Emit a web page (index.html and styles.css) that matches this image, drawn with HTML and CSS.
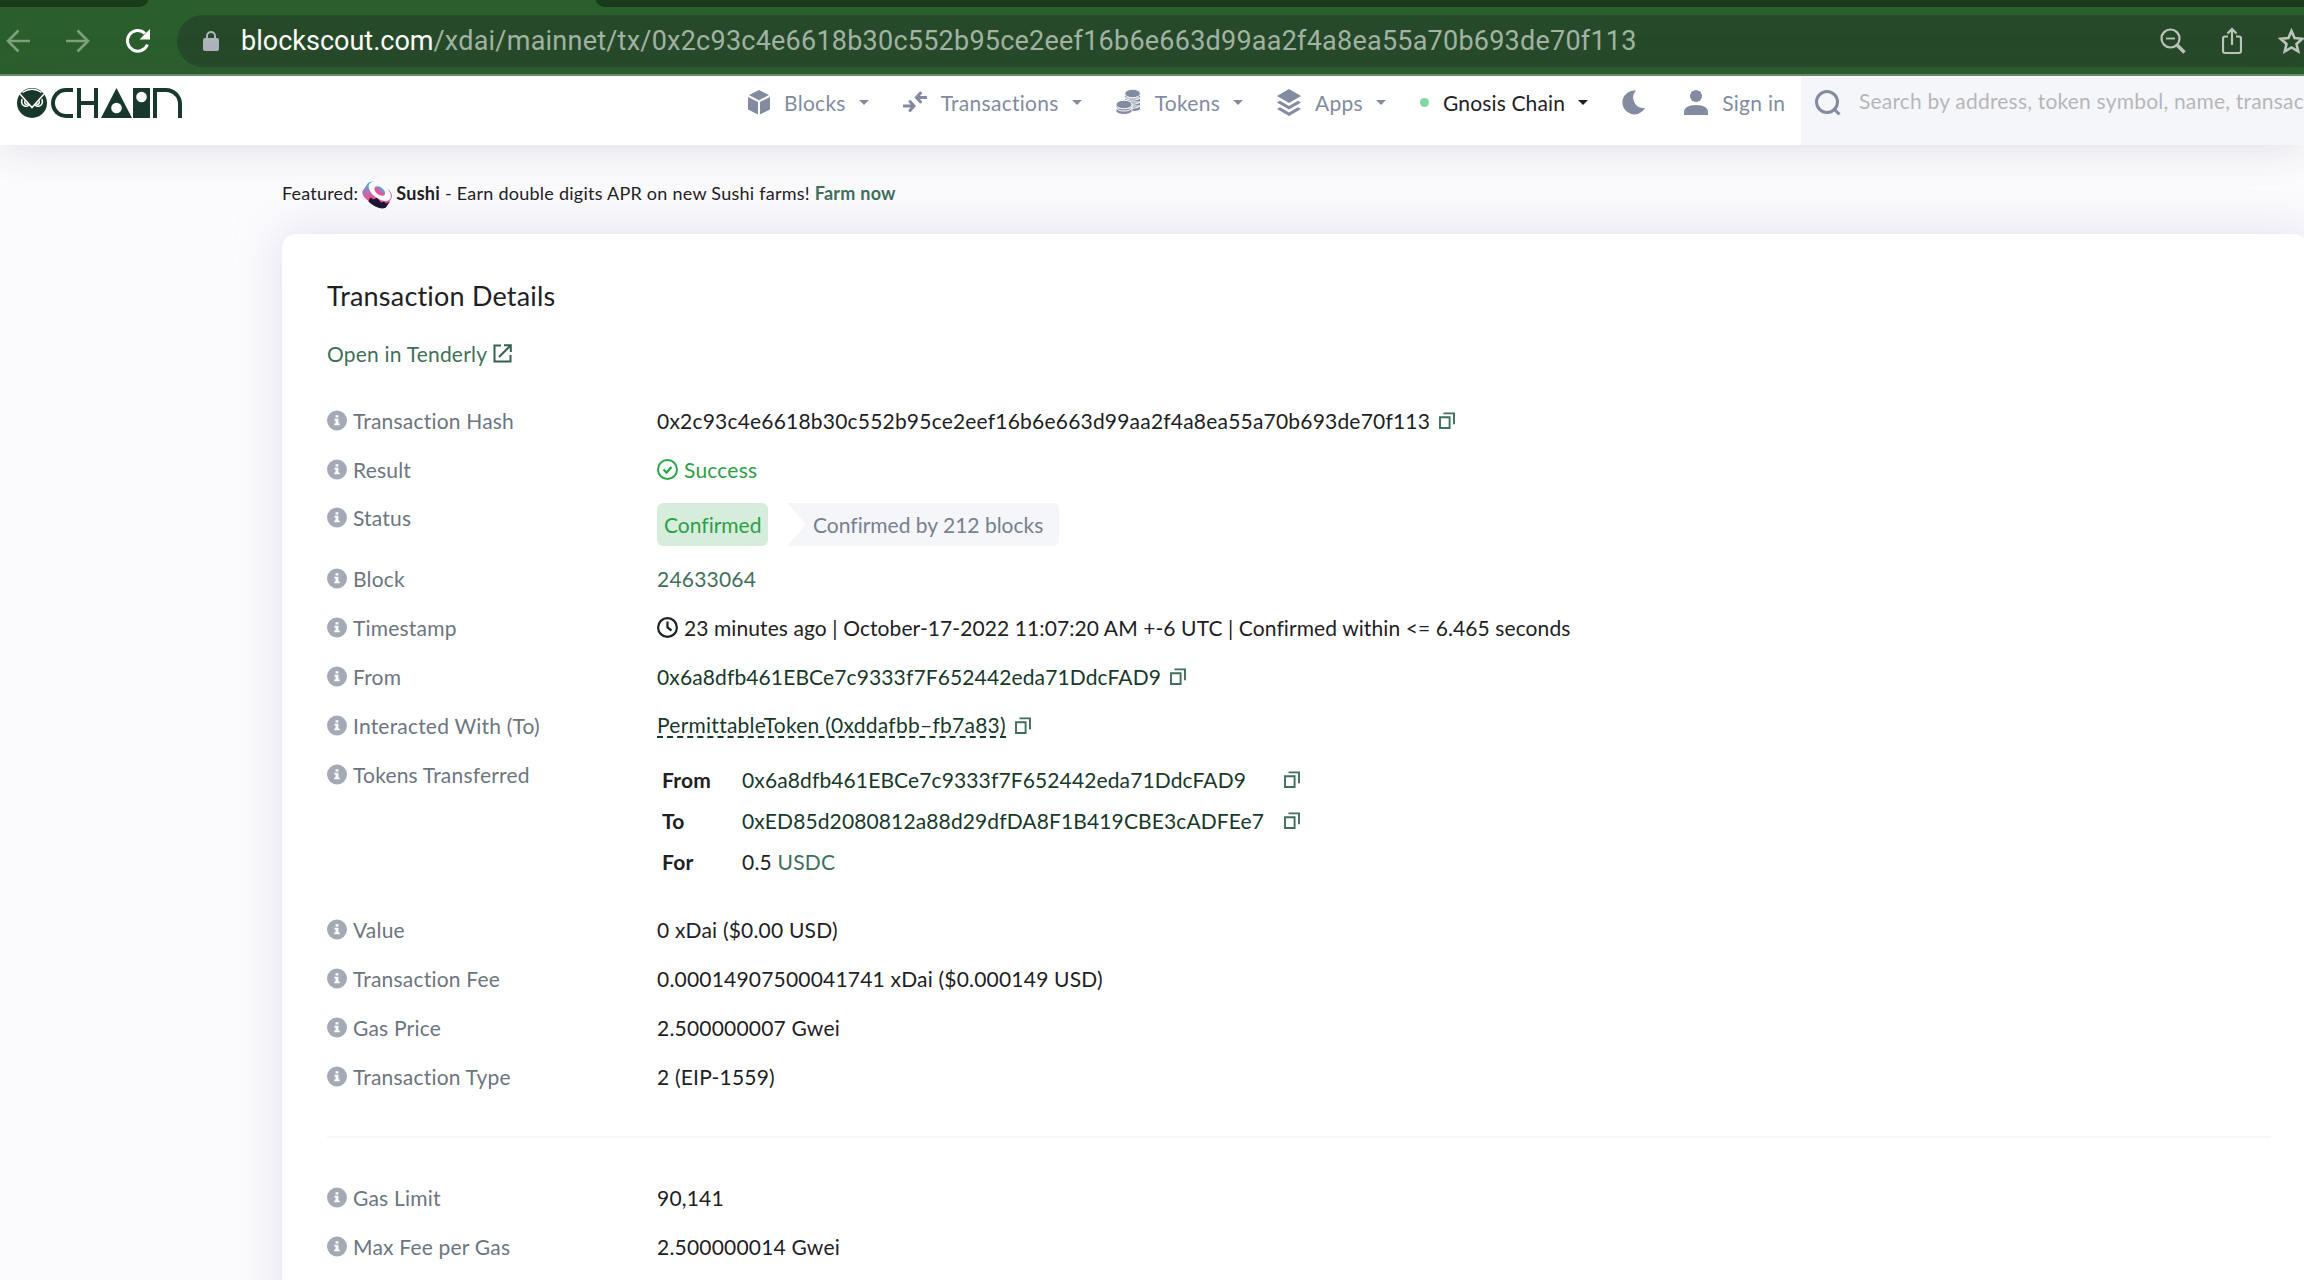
FILE: index.html
```html
<!DOCTYPE html>
<html lang="en">

<head>
  <meta charset="UTF-8">
  <meta name="viewport" content="width=device-width, initial-scale=1.0">
  <title>Transaction Details</title>
  <link rel="stylesheet" href="styles.css">
</head>

<body>
  <svg class="sprite">
    <symbol id="info" viewBox="0 0 21 21">
      <circle cx="10.5" cy="10.5" r="10.5" fill="#a3a9b5" />
      <path d="M9 5h3v2.4H9zM7.8 8.7H12v5h1.4v1.8H7.6v-1.8H9v-3.2H7.8z" fill="#fff" />
    </symbol>
    <symbol id="copy" viewBox="0 0 16 17">
      <path d="M1 5.2h9.6v10.8H1zM4.5 1.4H15v10.8" fill="none" stroke="#3f6f5b" stroke-width="1.9" />
    </symbol>
    <symbol id="caret" viewBox="0 0 10 5">
      <path d="M0 0h10L5 5z" fill="currentColor" />
    </symbol>
  </svg>

  <div class="browser">
    <div class="tabs">
      <div class="tab-left"></div>
      <div class="tab-right"></div>
    </div>
    <div class="toolbar">
      <svg class="arrow-back" width="24" height="32" viewBox="0 0 24 32" fill="none" stroke="#7fa181" stroke-width="2.6"><path d="M24 16H2M12.500 5.500L2 16l10.500 10.500" /></svg>
      <svg class="arrow-next" width="24" height="32" viewBox="0 0 24 32" fill="none" stroke="#7fa181" stroke-width="2.6"><path d="M0 16h22M11.500 5.500L22 16 11.500 26.500" /></svg>
      <svg class="reload" width="26" height="26" viewBox="0 0 26 26"><path d="M20 5.500A10.300 10.300 0 1 0 22.400 16.500" fill="none" stroke="#fff" stroke-width="3" /><path d="M25 1v10.500H14.500z" fill="#fff" /></svg>
      <div class="address">
        <svg class="lock" width="16" height="20" viewBox="0 0 16 20"><rect y="7" width="16" height="13" rx="2" fill="#b0b4bc" /><path d="M4 8V5a4 4 0 0 1 8 0v3" fill="none" stroke="#b0b4bc" stroke-width="2" /></svg>
        <span class="url"><b>blockscout.com</b><span class="path">/xdai/mainnet/tx/0x2c93c4e6618b30c552b95ce2eef16b6e663d99aa2f4a8ea55a70b693de70f113</span></span>
        <svg class="zoom-out" width="26" height="26" viewBox="0 0 26 26" fill="none" stroke="#bcc6bd"><circle cx="10.500" cy="10.500" r="9" stroke-width="2.200" /><path d="M6 10.500h9" stroke-width="1.800" /><path d="M17 17l7.500 7.500" stroke-width="3.400" /></svg>
        <svg class="share" width="20" height="28" viewBox="0 0 20 28" fill="none" stroke="#bcc6bd" stroke-width="2.200"><path d="M6 9.500H3a2 2 0 0 0-2 2V24a2 2 0 0 0 2 2h14a2 2 0 0 0 2-2V11.500a2 2 0 0 0-2-2h-3M10 18V2.500M5.500 6.500L10 2l4.500 4.500" /></svg>
        <svg class="star" width="27" height="26" viewBox="0 0 27 26"><path d="M13.500 3l3.100 7.100 7.700.7-5.800 5.100 1.700 7.500-6.700-4-6.700 4 1.700-7.500-5.800-5.100 7.700-.7z" fill="none" stroke="#bcc6bd" stroke-width="2.600" /></svg>
      </div>
    </div>
  </div>

  <nav>
    <div class="logo">
      <svg width="30" height="30" viewBox="0 0 30 30"><circle cx="15" cy="15" r="15" fill="#17382a" /><g fill="none" stroke="#fff" stroke-width="1.500"><path d="M3 6L15 19.500 27 6M5.500 4.500Q15-2 24.500 4.500" /><path d="M5 11c-2 8 6 9 7.500 5M25 11c2 8-6 9-7.500 5M8 12.500c-1 3 1 5 3 3M22 12.500c1 3-1 5-3 3M15 19.500" /></g></svg>
      <i class="shape-c"></i>
      <i class="shape-h"></i>
      <svg class="shape-a" width="31" height="30" viewBox="0 0 31 30"><path d="M15.500 0L31 30H0z" fill="#17382a" /><circle cx="15.500" cy="20" r="5.300" fill="#fff" /></svg>
      <svg class="shape-i" width="17" height="30" viewBox="0 0 17 30"><path d="M0 0h17v30H0z" fill="#17382a" /><circle cx="8.500" cy="9" r="5.300" fill="#fff" /></svg>
      <i class="shape-n"></i>
    </div>
    <div class="menu">
      <a class="item blocks"><svg width="22" height="25" viewBox="0 0 22 25" fill="#828ba0"><path d="M11 0l10 5-10 5.200L1 5zM0 7l10 5v12.500L0 19.500zM22 7l-10 5v12.500l10-5z" /></svg><span>Blocks</span><svg class="caret"><use href="#caret" /></svg></a>
      <a class="item txs"><svg width="24" height="22" viewBox="0 0 24 22" fill="none" stroke="#828ba0" stroke-width="3" stroke-linecap="round"><path d="M1 15h9M7 10.500l4 4.500-4 4.500M23 6.500h-9M17.500 2l-4 4.500 4 4.500" /></svg><span>Transactions</span><svg class="caret"><use href="#caret" /></svg></a>
      <a class="item tokens"><svg width="25" height="26" viewBox="0 0 25 26"><g fill="#828ba0" stroke="#fff"><path d="M8.700 17v3c2 3.500 13.800 3.500 15.800 0v-3zM8.700 13v3.500c2 3.500 13.800 3.500 15.800 0V13zM8.700 9v3.500c2 3.500 13.800 3.500 15.800 0V9zM8.700 5v3.500c2 3.500 13.800 3.500 15.800 0V5z" /><ellipse cx="16.600" cy="4.500" rx="7.800" ry="4.200" /><path d="M0 19v3.500c2 4 14 4 16 0V19zM0 15v4c2 4 14 4 16 0v-4z" /><ellipse cx="8" cy="15.500" rx="8" ry="4.300" /></g></svg><span>Tokens</span><svg class="caret"><use href="#caret" /></svg></a>
      <a class="item apps"><svg width="24" height="27" viewBox="0 0 24 27" fill="#828ba0"><path d="M12 0l12 7-12 7L0 7z" /><path d="M0 13.500l3-1.700 9 5.200 9-5.200 3 1.700-12 7zM0 20l3-1.700 9 5.200 9-5.200 3 1.700-12 7z" /></svg><span>Apps</span><svg class="caret"><use href="#caret" /></svg></a>
      <a class="item chain"><i class="dot"></i><span>Gnosis Chain</span><svg class="caret"><use href="#caret" /></svg></a>
      <svg class="moon" width="24" height="25" viewBox="0 0 24 25"><path d="M14 .5a12 12 0 1 0 9 17.500A10.500 10.500 0 0 1 14 .5z" fill="#828ba0" /></svg>
      <a class="item sign"><svg width="24" height="25" viewBox="0 0 24 25" fill="#828ba0"><circle cx="12" cy="6" r="6" /><path d="M0 25v-3c0-4 4-7 12-7s12 3 12 7v3z" /></svg><span>Sign in</span></a>
    </div>
    <div class="search">
      <svg width="26" height="26" viewBox="0 0 26 26" fill="none" stroke="#828ba0" stroke-width="3"><circle cx="12" cy="12" r="10.500" /><path d="M18.500 18.500l6 6" /></svg>
      <span>Search by address, token symbol, name, transaction</span>
    </div>
  </nav>

  <main>
    <div class="featured"><span>Featured:</span>
      <svg width="30" height="28" viewBox="0 0 30 28">
        <defs>
          <linearGradient id="roll" x1="0" y1="0" x2="0" y2="1">
            <stop offset="0" stop-color="#3fb4e0" />
            <stop offset=".6" stop-color="#e5559f" />
          </linearGradient>
        </defs>
        <path d="M6 2C12-3 33 9 29.500 17l-5 8.500C21 31-2 18 .5 10z" fill="url(#roll)" />
        <path d="M6.500 20.500l1.500-4 4 2 3-2 4 5 3-1 2 2 4-2-3.500 5C22 30 12 26 6.500 20.500z" fill="#1b1631" />
        <ellipse cx="17.800" cy="10.300" rx="12.800" ry="7.200" transform="rotate(37 17.800 10.300)" fill="#fff" />
        <ellipse cx="17.800" cy="10" rx="6.200" ry="3.700" transform="rotate(37 17.800 10)" fill="url(#roll)" />
      </svg>
      <span class="promo"><b>Sushi</b> - Earn double digits APR on new Sushi farms! <b class="farm">Farm now</b></span>
    </div>

    <div class="card">
      <h1>Transaction Details</h1>
      <div class="tenderly"><span>Open in Tenderly</span>
        <svg width="19" height="19" viewBox="0 0 19 19" fill="none" stroke="#31614c" stroke-width="2"><path d="M8 1.500H1.500v16h16V11M11 1.200h6.800V8M17.500 1.500L6 13" /></svg>
      </div>

      <dl>
        <dt><svg class="info"><use href="#info" /></svg>Transaction Hash</dt>
        <dd><span>0x2c93c4e6618b30c552b95ce2eef16b6e663d99aa2f4a8ea55a70b693de70f113</span><svg class="copy"><use href="#copy" /></svg></dd>
        <dt><svg class="info"><use href="#info" /></svg>Result</dt>
        <dd class="success"><svg width="21" height="21" viewBox="0 0 21 21" fill="none" stroke="#28a745" stroke-width="2"><circle cx="10.500" cy="10.500" r="9.500" /><path d="M6.500 10.500l3 3 5-5.500" stroke-width="2.300" /></svg><span>Success</span></dd>
        <dt class="status-label"><svg class="info"><use href="#info" /></svg>Status</dt>
        <dd class="status"><div class="badge">Confirmed</div><div class="blocks-by">Confirmed by 212 blocks</div></dd>
        <dt><svg class="info"><use href="#info" /></svg>Block</dt>
        <dd><span class="link">24633064</span></dd>
        <dt><svg class="info"><use href="#info" /></svg>Timestamp</dt>
        <dd class="time"><svg width="21" height="21" viewBox="0 0 21 21" fill="none" stroke="#1d2124" stroke-width="2.200"><circle cx="10.500" cy="10.500" r="9.400" /><path d="M10.500 4.500v6l4 3" /></svg><span>23 minutes ago | October-17-2022 11:07:20 AM +-6 UTC | Confirmed within &lt;= 6.465 seconds</span></dd>
        <dt><svg class="info"><use href="#info" /></svg>From</dt>
        <dd><span class="addr">0x6a8dfb461EBCe7c9333f7F652442eda71DdcFAD9</span><svg class="copy"><use href="#copy" /></svg></dd>
        <dt><svg class="info"><use href="#info" /></svg>Interacted With (To)</dt>
        <dd><span class="addr contract">PermittableToken (0xddafbb–fb7a83)</span><svg class="copy"><use href="#copy" /></svg></dd>
        <dt><svg class="info"><use href="#info" /></svg>Tokens Transferred</dt>
        <dd class="transfer">
          <b>From</b><span class="addr">0x6a8dfb461EBCe7c9333f7F652442eda71DdcFAD9</span><svg class="copy"><use href="#copy" /></svg>
          <b>To</b><span class="addr">0xED85d2080812a88d29dfDA8F1B419CBE3cADFEe7</span><svg class="copy"><use href="#copy" /></svg>
          <b>For</b><span>0.5 <a class="link">USDC</a></span>
        </dd>
        <dt><svg class="info"><use href="#info" /></svg>Value</dt>
        <dd>0 xDai ($0.00 USD)</dd>
        <dt><svg class="info"><use href="#info" /></svg>Transaction Fee</dt>
        <dd>0.00014907500041741 xDai ($0.000149 USD)</dd>
        <dt><svg class="info"><use href="#info" /></svg>Gas Price</dt>
        <dd>2.500000007 Gwei</dd>
        <dt><svg class="info"><use href="#info" /></svg>Transaction Type</dt>
        <dd>2 (EIP-1559)</dd>
      </dl>
      <hr>
      <dl>
        <dt><svg class="info"><use href="#info" /></svg>Gas Limit</dt>
        <dd>90,141</dd>
        <dt><svg class="info"><use href="#info" /></svg>Max Fee per Gas</dt>
        <dd>2.500000014 Gwei</dd>
      </dl>
    </div>
  </main>
</body>

</html>
```
FILE: styles.css
```css
:root {
  --chrome: #2a5f2d;
  --chrome-dark: #1a3a1c;
  --logo: #17382a;
  --gray: #828ba0;
  --text: #1d2124;
  --link: #3f6f5b;
}

* {
  box-sizing: border-box;
}

body {
  margin: 0;
  height: 1280px;
  overflow: hidden;
  background: #fbfafd;
  color: var(--text);
  font: 21px/31px Lato, "Open Sans", sans-serif;
  font-variant-ligatures: none;
  letter-spacing: .2px;
}

.sprite {
  display: none;
}

svg {
  flex: none;
}

/* browser chrome */
.browser {
  height: 76px;
  background: var(--chrome);
  border-bottom: 2px solid #6b906c;
}

.tabs {
  display: flex;
  justify-content: space-between;
  height: 7px;
}

.tab-left,
.tab-right {
  background: var(--chrome-dark);
}

.tab-left {
  width: 148px;
  border-bottom-right-radius: 10px 7px;
}

.tab-right {
  width: 1708px;
  border-bottom-left-radius: 10px 7px;
}

.toolbar {
  display: flex;
  align-items: center;
  height: 67px;
  padding-left: 6px;
}

.arrow-next {
  margin-left: 36px;
}

.reload {
  margin-left: 35px;
}

.address {
  display: flex;
  align-items: center;
  flex: 1;
  height: 52px;
  margin-left: 26px;
  padding-left: 26px;
  background: #264a29;
  border-radius: 26px 0 0 26px;
}

.url {
  width: 1919px;
  margin-left: 22px;
  color: #a3b3a4;
  font: 27px/40px Roboto, sans-serif;
  letter-spacing: 0;
  white-space: nowrap;
}

.url b {
  color: #fff;
  font-weight: 400;
}

.path {
  letter-spacing: .23px;
}

.share {
  margin-left: 36px;
}

.star {
  margin-left: 36px;
}

/* site navigation */
nav {
  display: flex;
  position: relative;
  height: 69px;
  background: #fff;
  box-shadow: 0 0 44px rgba(60, 60, 80, .16);
  color: var(--gray);
}

.logo {
  display: flex;
  width: 748px;
  padding: 12px 0 0 17px;
}

.shape-c {
  width: 22px;
  height: 30px;
  margin-left: 4px;
  border: 4px solid var(--logo);
  border-right: 0;
  border-radius: 16px 0 0 16px;
}

.shape-h {
  width: 21px;
  height: 30px;
  margin-left: 4px;
  border: solid var(--logo);
  border-width: 0 4px;
  background: linear-gradient(var(--logo), var(--logo)) 0 13px / 100% 4px no-repeat;
}

.shape-a {
  margin-left: 3px;
}

.shape-i {
  margin-left: 1px;
}

.shape-n {
  width: 29px;
  height: 30px;
  margin-left: 3px;
  border: 4px solid var(--logo);
  border-bottom: 0;
  border-top-right-radius: 16px;
}

.menu {
  display: flex;
  align-items: center;
  width: 1053px;
  height: 52px;
  letter-spacing: .28px;
}

.item {
  display: flex;
  align-items: center;
  white-space: nowrap;
}

.item > span {
  margin-left: 14px;
}

.caret {
  width: 10px;
  height: 5px;
  margin-left: 13px;
}

.txs,
.tokens,
.apps,
.chain,
.moon {
  margin-left: 34px;
}

.sign {
  margin-left: 38px;
}

.chain {
  color: var(--text);
  letter-spacing: .15px;
}

.dot {
  width: 9px;
  height: 9px;
  border-radius: 50%;
  background: #84d6a5;
}

.search {
  display: flex;
  flex: 1;
  padding: 14px 0 0 14px;
  background: #f5f6fa;
  color: #b5b6ba;
  white-space: nowrap;
  overflow: hidden;
}

.search span {
  margin: -5px 0 0 18px;
}

/* content */
main {
  width: 2026px;
  margin-left: 282px;
}

.featured {
  display: flex;
  align-items: center;
  height: 89px;
  padding-top: 7px;
  font-size: 18px;
}

.featured svg {
  margin: 3px 4px 0 4px;
}

.promo {
  letter-spacing: .25px;
}

.farm,
.tenderly {
  color: var(--link);
}

.card {
  height: 1100px;
  padding: 38px 37px 0 45px;
  background: #fff;
  border-radius: 14px;
  box-shadow: 0 0 44px rgba(202, 199, 226, .5);
}

h1 {
  margin: 0;
  font-size: 27px;
  line-height: 48px;
  font-weight: 400;
}

.tenderly {
  display: flex;
  align-items: center;
  height: 67px;
}

.tenderly svg {
  margin-left: 6px;
}

dl {
  display: grid;
  grid-template-columns: 330px 1fr;
  margin: 9px 0 0;
}

dt,
dd {
  display: flex;
  align-items: center;
  height: 49px;
  margin: 0;
  white-space: nowrap;
}

dt {
  color: #6c7580;
}

.info {
  width: 20px;
  height: 21px;
  margin-right: 6px;
}

.copy {
  width: 16px;
  height: 17px;
  margin-left: 9px;
}

.success,
.badge {
  color: #2d9f47;
}

.success span,
.time span {
  margin-left: 6px;
}

.time {
  letter-spacing: .09px;
}

.link {
  color: var(--link);
}

.addr {
  color: #17382a;
  letter-spacing: .12px;
}

.contract {
  border-bottom: 2px dashed #17382a;
  line-height: 22px;
  letter-spacing: .25px;
}

.status-label {
  height: 47px;
}

.status {
  align-items: flex-start;
  height: 60px;
  padding-top: 9px;
  line-height: 43px;
  letter-spacing: 0;
}

.badge {
  width: 111px;
  height: 43px;
  padding-left: 7px;
  background: #d6eddb;
  border-radius: 6px;
}

.blocks-by {
  width: 272px;
  height: 43px;
  margin-left: 19px;
  padding-left: 26px;
  background: #f5f6fa;
  border-radius: 0 5px 5px 0;
  clip-path: polygon(0 0, 100% 0, 100% 100%, 0 100%, 19px 50%);
  color: #77808f;
}

.transfer {
  display: grid;
  grid-template-columns: 80px 533px 1fr;
  grid-auto-rows: 41px;
  height: 155px;
  padding: 9px 0 0 5px;
  align-items: center;
}

hr {
  height: 2px;
  margin: 35px 0;
  border: 0;
  background: #f7f7fa;
}
```
